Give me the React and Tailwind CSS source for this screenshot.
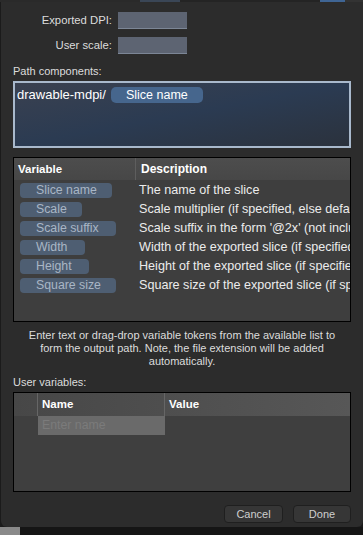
import React from "react";

const variables = [
  { token: "Slice name", w: "w-[92px]", desc: "The name of the slice" },
  { token: "Scale", w: "w-[62px]", desc: "Scale multiplier (if specified, else default 1)" },
  { token: "Scale suffix", w: "w-[96px]", desc: "Scale suffix in the form '@2x' (not included for 1x)" },
  { token: "Width", w: "w-[65px]", desc: "Width of the exported slice (if specified)" },
  { token: "Height", w: "w-[69px]", desc: "Height of the exported slice (if specified)" },
  { token: "Square size", w: "w-[96px]", desc: "Square size of the exported slice (if specified)" },
];

const App = () => {
  return (
    <div className="w-[363px] h-[535px] overflow-hidden bg-[#1b1b1b] font-['Liberation_Sans',Arial,sans-serif] text-[11px] text-[#e6e6e6] leading-[15px]">
      {/* background window peeking through at the top */}
      <div className="h-[2px] flex">
        <div className="w-[140px] bg-[#2a2a2a]" />
        <div className="w-[40px] bg-[#3a4656]" />
        <div className="w-[140px] bg-[#242424]" />
        <div className="w-[25px] bg-[#3f6594]" />
        <div className="flex-1 bg-[#333]" />
      </div>

      <div className="ml-[1px] w-[362px] h-[525px] bg-[#2c2c2c] rounded-b-[6px] px-[12px] pt-[10px] flex flex-col">
        {/* DPI + scale */}
        <div className="flex flex-col gap-[8px]">
          <div className="flex items-center">
            <span className="w-[99px] text-right text-[11.3px] text-[#dcdcdc]">Exported DPI:</span>
            <div className="ml-[6px] w-[69px] h-[17px] bg-[#5d6472] border-b border-[#7c8696]" />
          </div>
          <div className="flex items-center">
            <span className="w-[99px] text-right text-[11.3px] text-[#dcdcdc]">User scale:</span>
            <div className="ml-[6px] w-[69px] h-[17px] bg-[#5d6472] border-b border-[#7c8696]" />
          </div>
        </div>

        <div className="mt-[10px] text-[#dcdcdc]">Path components:</div>
        <div className="mt-[2px] h-[67px] border-2 border-[#a9b9cc] bg-gradient-to-br from-[#3a4150] via-[#2b3b52] to-[#2b323d] px-[2px] pt-[3px]">
          <div className="flex items-center gap-[5px]">
            <span className="text-[13px] text-white leading-[17px]">drawable-mdpi/</span>
            <span className="w-[92px] h-[16px] rounded-[5px] bg-[#46668d] text-white text-[12.5px] leading-[16px] text-center">
              Slice name
            </span>
          </div>
        </div>

        {/* variables table */}
        <div className="mt-[9px] h-[165px] border border-black bg-[#3e3e3e] overflow-hidden">
          <div className="h-[22px] flex items-center bg-gradient-to-b from-[#4d4d4d] to-[#474747] font-bold text-[11.5px] text-white">
            <div className="w-[122px] shrink-0 pl-[4px] h-full flex items-center border-r border-[#5e5e5e]">Variable</div>
            <div className="pl-[5px] text-[12px]">Description</div>
          </div>
          <div className="pt-[1px] flex flex-col">
            {variables.map((v) => (
              <div key={v.token} className="h-[19px] flex items-center">
                <div className="w-[125px] shrink-0 pl-[6px] flex items-center">
                  <span className={`${v.w} h-[15px] rounded-[4px] bg-[#4e5e72] text-[#a9b6c5] text-[12.3px] leading-[15px] pl-[16px] whitespace-nowrap`}>
                    {v.token}
                  </span>
                </div>
                <span className="whitespace-nowrap text-[12.6px] text-[#ececec]">{v.desc}</span>
              </div>
            ))}
          </div>
        </div>

        <p className="mt-[7px] text-center text-[11px] leading-[13px] text-[#dcdcdc]">
          Enter text or drag-drop variable tokens from the available list to
          <br />
          form the output path. Note, the file extension will be added
          <br />
          automatically.
        </p>

        <div className="mt-[7px] text-[#dcdcdc]">User variables:</div>
        {/* user variables table */}
        <div className="mt-[2px] h-[100px] border border-black bg-[#3f3f3f] overflow-hidden">
          <div className="h-[23px] flex bg-gradient-to-r from-[#474747] to-[#575757] font-bold text-[11.5px] text-white">
            <div className="w-[24px] border-r border-[#666]" />
            <div className="w-[127px] pl-[4px] flex items-center border-r border-[#666]">Name</div>
            <div className="pl-[4px] flex items-center">Value</div>
          </div>
          <div className="flex h-[19px]">
            <div className="w-[24px]" />
            <div className="w-[127px] bg-[#6a6a6a] pl-[4px] flex items-center text-[12.3px] text-[#7b7b7b]">Enter name</div>
          </div>
        </div>

        {/* buttons */}
        <div className="mt-auto mb-[4px] flex justify-end gap-[10px]">
          <button className="w-[59px] h-[18px] rounded-[4px] bg-[#363636] border border-[#1f1f1f] text-[11px] leading-[16px] text-[#cfcfcf]">
            Cancel
          </button>
          <button className="w-[58px] h-[18px] rounded-[4px] bg-[#363636] border border-[#1f1f1f] text-[11px] leading-[16px] text-[#cfcfcf]">
            Done
          </button>
        </div>
      </div>
      <div className="h-[8px] flex">
        <div className="w-[20px] bg-[#8a8a8a]" />
        <div className="flex-1 bg-[#151515]" />
      </div>
    </div>
  );
};

export default App;
